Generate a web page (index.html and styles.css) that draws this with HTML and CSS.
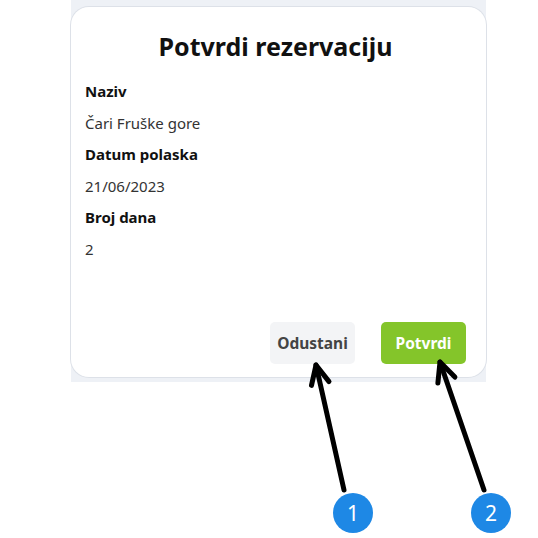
FILE: index.html
```html
<!DOCTYPE html>
<html lang="sr">
<head>
<meta charset="utf-8">
<link rel="stylesheet" href="styles.css">
</head>
<body>
<div class="stage">
  <div class="panel">
    <div class="modal">
      <h1 class="title">Potvrdi rezervaciju</h1>
      <dl class="details">
        <dt>Naziv</dt>
        <dd>Čari Fruške gore</dd>
        <dt>Datum polaska</dt>
        <dd>21/06/2023</dd>
        <dt>Broj dana</dt>
        <dd>2</dd>
      </dl>
      <div class="actions">
        <button class="btn btn-cancel">Odustani</button>
        <button class="btn btn-confirm">Potvrdi</button>
      </div>
    </div>
  </div>

  <svg class="arrows" width="538" height="538" viewBox="0 0 538 538">
    <g stroke="#000" stroke-width="5" stroke-linecap="round" stroke-linejoin="round" fill="none">
      <line x1="344" y1="490" x2="316" y2="365"/>
      <polyline points="311.5,385.4 316,365 329,381.6"/>
      <line x1="484" y1="490" x2="440" y2="362"/>
      <polyline points="437.9,382.9 440,362 454.9,377.1"/>
    </g>
  </svg>
  <div class="badge badge-1">1</div>
  <div class="badge badge-2">2</div>
</div>
</body>
</html>
```

FILE: styles.css
```css
* { box-sizing: border-box; }

html, body {
  margin: 0;
  padding: 0;
  background: #ffffff;
}

body {
  font-family: "Noto Sans", "Open Sans", sans-serif;
}

.stage {
  position: relative;
  width: 538px;
  height: 538px;
}

.panel {
  margin-left: 71px;
  width: 415px;
  height: 382px;
  background: #eef1f6;
  padding-top: 7px;
}

.modal {
  height: 370px;
  background: #ffffff;
  border-radius: 18px;
  box-shadow: 0 0 0 1px #dde1e8;
  display: flex;
  flex-direction: column;
  padding: 22px 20px 13px 14px;
}

.title {
  margin: 0;
  text-align: center;
  font-size: 25px;
  line-height: 34px;
  font-weight: 700;
  color: #111;
  padding-left: 0;
}

.details {
  margin: 13px 0 0 0;
  font-size: 15px;
  line-height: 31.6px;
}

.details dt {
  font-weight: 700;
  color: #111;
}

.details dd {
  margin: 0;
  color: #333;
}

.actions {
  margin-top: auto;
  display: flex;
  justify-content: flex-end;
  gap: 26px;
}

.btn {
  width: 85px;
  height: 42px;
  border: none;
  border-radius: 5px;
  font-family: inherit;
  font-size: 15.5px;
  font-weight: 700;
  padding: 0;
}

.btn-cancel {
  background: #f3f4f6;
  color: #444;
}

.btn-confirm {
  background: #84c52a;
  color: #fff;
}

.arrows {
  position: absolute;
  left: 0;
  top: 0;
  pointer-events: none;
}

.badge {
  position: absolute;
  width: 40px;
  height: 40px;
  border-radius: 50%;
  background: #1e88e5;
  color: #fff;
  font-size: 21px;
  line-height: 40px;
  text-align: center;
  font-weight: 400;
}

.badge-1 { left: 333px; top: 493px; }
.badge-2 { left: 471px; top: 493px; }
```
